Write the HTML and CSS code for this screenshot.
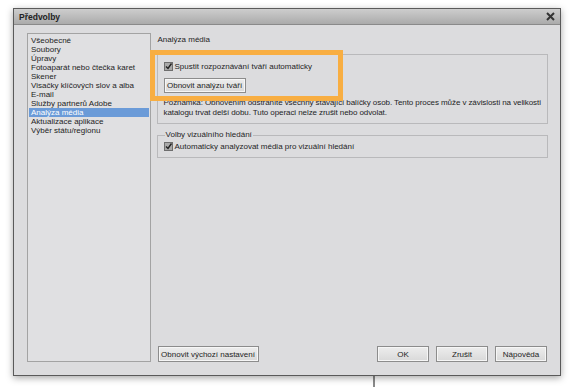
FILE: index.html
```html
<!DOCTYPE html>
<html lang="cs">
<head>
    <meta charset="UTF-8">
    <title>Předvolby</title>
    <link rel="stylesheet" href="styles.css">
</head>
<body>
    <div class="dialog">
        <!-- title bar -->
        <div class="titlebar">
            <span class="title">Předvolby</span>
            <svg class="close" width="9" height="9" viewBox="0 0 9 9">
                <path d="M1 1 L8 8 M8 1 L1 8" stroke="#333" stroke-width="2"/>
            </svg>
        </div>

        <div class="dialogBody">
            <!-- category list -->
            <ul class="catList">
                <li>Všeobecné</li>
                <li>Soubory</li>
                <li>Úpravy</li>
                <li>Fotoaparát nebo čtečka karet</li>
                <li>Skener</li>
                <li>Visačky klíčových slov a alba</li>
                <li>E-mail</li>
                <li>Služby partnerů Adobe</li>
                <li class="selected">Analýza média</li>
                <li>Aktualizace aplikace</li>
                <li>Výběr státu/regionu</li>
            </ul>

            <!-- settings page -->
            <div class="page">
                <div class="pageTitle">Analýza média</div>

                <div class="group">
                    <div class="checkRow">
                        <span class="checkbox">
                            <svg width="9" height="9" viewBox="0 0 9 9">
                                <rect x="0.5" y="0.5" width="8" height="8" fill="#a9a9a9" stroke="#6e6e6e"/>
                                <path d="M2 4.5 L4 6.5 L7.5 1.5" fill="none" stroke="#222" stroke-width="1.4"/>
                            </svg>
                        </span>
                        Spustit rozpoznávání tváří automaticky
                    </div>
                    <button class="btn btnFaces">Obnovit analýzu tváří</button>
                    <p class="note">Poznámka: Obnovením odstraníte všechny stávající balíčky osob. Tento proces může v závislosti na velikosti<br>katalogu trvat delší dobu. Tuto operaci nelze zrušit nebo odvolat.</p>
                </div>

                <fieldset class="group groupVisual">
                    <legend>Volby vizuálního hledání</legend>
                    <div class="checkRow">
                        <span class="checkbox">
                            <svg width="9" height="9" viewBox="0 0 9 9">
                                <rect x="0.5" y="0.5" width="8" height="8" fill="#a9a9a9" stroke="#6e6e6e"/>
                                <path d="M2 4.5 L4 6.5 L7.5 1.5" fill="none" stroke="#222" stroke-width="1.4"/>
                            </svg>
                        </span>
                        Automaticky analyzovat média pro vizuální hledání
                    </div>
                </fieldset>

                <div class="footer">
                    <button class="btn btnReset">Obnovit výchozí nastavení</button>
                    <div class="footerRight">
                        <button class="btn btnSmall">OK</button>
                        <button class="btn btnSmall">Zrušit</button>
                        <button class="btn btnSmall">Nápověda</button>
                    </div>
                </div>
            </div>
        </div>

        <!-- orange highlight over the face recognition block -->
        <div class="highlight"></div>
    </div>
    <div class="bgLine"></div>
</body>
</html>
```

FILE: styles.css
```css
/* Base */
body {
    margin: 0;
    background: #fff;
    font-family: "Liberation Sans", Arial, sans-serif;
    font-size: 8px;
    color: #1e1e1e;
    overflow: hidden;
}

/* Dialog window */
.dialog {
    position: relative;
    margin: 8px 0 0 13px;
    width: 546px;
    height: 366px;
    border: 1px solid #5a5a5a;
    background: #dcdcde;
    box-shadow: 0 2px 7px rgba(0, 0, 0, 0.35);
}

.titlebar {
    height: 15px;
    border-bottom: 1px solid #8a8a8a;
    background: linear-gradient(#cdcdcd, #ababab);
    display: flex;
    align-items: center;
    justify-content: space-between;
    padding: 0 5px 0 5px;
}

.title {
    font-weight: bold;
    font-size: 8.5px;
    color: #222;
}

.close {
    display: block;
}

.dialogBody {
    display: flex;
    padding: 8px 12px 13px 13px;
    height: 329px;
}

/* Category list */
.catList {
    list-style: none;
    margin: 0;
    padding: 2px 1px;
    width: 120px;
    border: 1px solid #a3a3a3;
    background: #e0e0e2;
}

.catList li {
    height: 9px;
    line-height: 9px;
    padding-left: 2px;
    white-space: nowrap;
}

.catList li.selected {
    background: #6b9bd8;
    color: #fff;
}

/* Settings page */
.page {
    margin-left: 6px;
    width: 393px;
    display: flex;
    flex-direction: column;
}

.pageTitle {
    line-height: 10px;
    margin-top: 2px;
    padding-left: 1px;
}

.group {
    margin: 9px 0 0 0;
    border: 1px solid #b9b9bb;
    padding: 7px 6px 3px 6px;
    height: 58px;
}

.checkRow {
    display: flex;
    align-items: center;
    height: 9px;
    line-height: 9px;
    gap: 2px;
}

.checkbox svg {
    display: block;
}

.btn {
    font-family: inherit;
    font-size: 8px;
    color: #1e1e1e;
    border: 1px solid #8c8c8c;
    background: linear-gradient(#ededed, #d9d9d9);
    box-shadow: inset 0 0 0 1px #f6f6f6;
    padding: 0;
    margin: 0;
}

.btnFaces {
    display: block;
    margin-top: 7px;
    width: 82px;
    height: 15px;
}

.note {
    margin: 5px 0 0 0;
    line-height: 10px;
    white-space: nowrap;
    letter-spacing: -0.08px;
}

.groupVisual {
    margin: 6px 0 0 0;
    height: auto;
    padding: 2px 6px 6px 6px;
    min-width: 0;
}

.groupVisual legend {
    padding: 0 1px;
    margin-left: 1px;
    line-height: 10px;
}

/* Footer buttons */
.footer {
    margin-top: auto;
    display: flex;
    justify-content: space-between;
    padding: 0 1px;
}

.btnReset {
    width: 101px;
    height: 16px;
}

.footerRight {
    display: flex;
    gap: 7px;
}

.btnSmall {
    width: 52px;
    height: 16px;
}

/* Overlay highlight */
.highlight {
    position: absolute;
    left: 136px;
    top: 41px;
    width: 183px;
    height: 41px;
    border: 5px solid #f8ae42;
}

.bgLine {
    margin-left: 373px;
    width: 2px;
    height: 11px;
    background: #8a8a8a;
}
```
